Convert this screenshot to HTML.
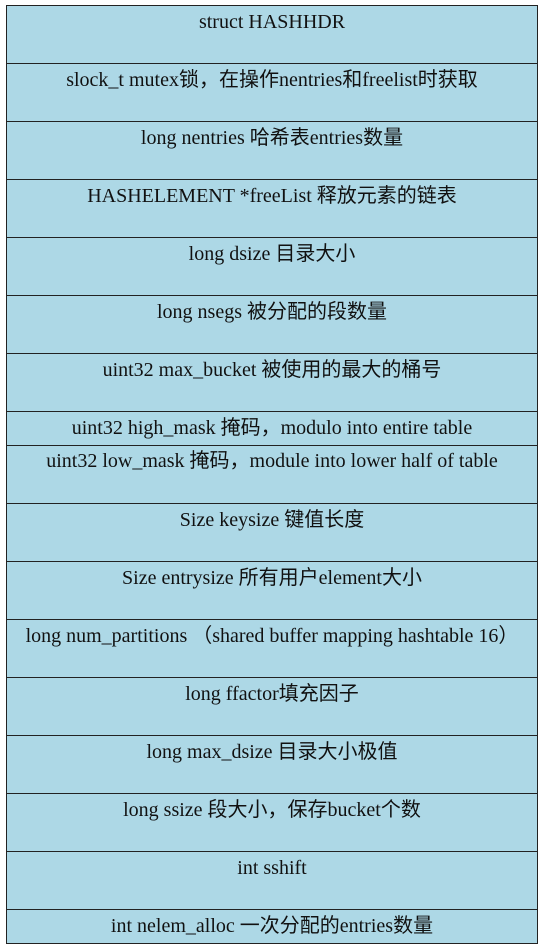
<!DOCTYPE html>
<html><head><meta charset="utf-8"><style>
body{margin:0;background:#fff;width:545px;height:948px;position:relative;}
.r{position:absolute;left:6px;width:532px;background:#add8e6;border:1px solid #222;box-sizing:border-box;text-align:center;font-family:"Liberation Serif","Noto Sans CJK SC",serif;font-size:20px;color:#111;line-height:22px;padding-top:5px;white-space:nowrap}
</style></head><body>
<div class="r" style="top:5px;height:59px">struct HASHHDR</div>
<div class="r" style="top:63px;height:59px">slock_t mutex锁，在操作nentries和freelist时获取</div>
<div class="r" style="top:121px;height:59px">long nentries 哈希表entries数量</div>
<div class="r" style="top:179px;height:59px">HASHELEMENT *freeList 释放元素的链表</div>
<div class="r" style="top:237px;height:59px">long dsize 目录大小</div>
<div class="r" style="top:295px;height:59px">long nsegs 被分配的段数量</div>
<div class="r" style="top:353px;height:59px">uint32 max_bucket 被使用的最大的桶号</div>
<div class="r" style="top:411px;height:35px;padding-top:5px">uint32 high_mask 掩码，modulo into entire table</div>
<div class="r" style="top:445px;height:59px;padding-top:4px">uint32 low_mask 掩码，module into lower half of table</div>
<div class="r" style="top:503px;height:59px">Size keysize 键值长度</div>
<div class="r" style="top:561px;height:59px">Size entrysize 所有用户element大小</div>
<div class="r" style="top:619px;height:59px">long num_partitions （shared buffer mapping hashtable 16）</div>
<div class="r" style="top:677px;height:59px">long ffactor填充因子</div>
<div class="r" style="top:735px;height:59px">long max_dsize 目录大小极值</div>
<div class="r" style="top:793px;height:59px">long ssize 段大小，保存bucket个数</div>
<div class="r" style="top:851px;height:59px">int sshift</div>
<div class="r" style="top:909px;height:35px">int nelem_alloc 一次分配的entries数量</div>
</body></html>
